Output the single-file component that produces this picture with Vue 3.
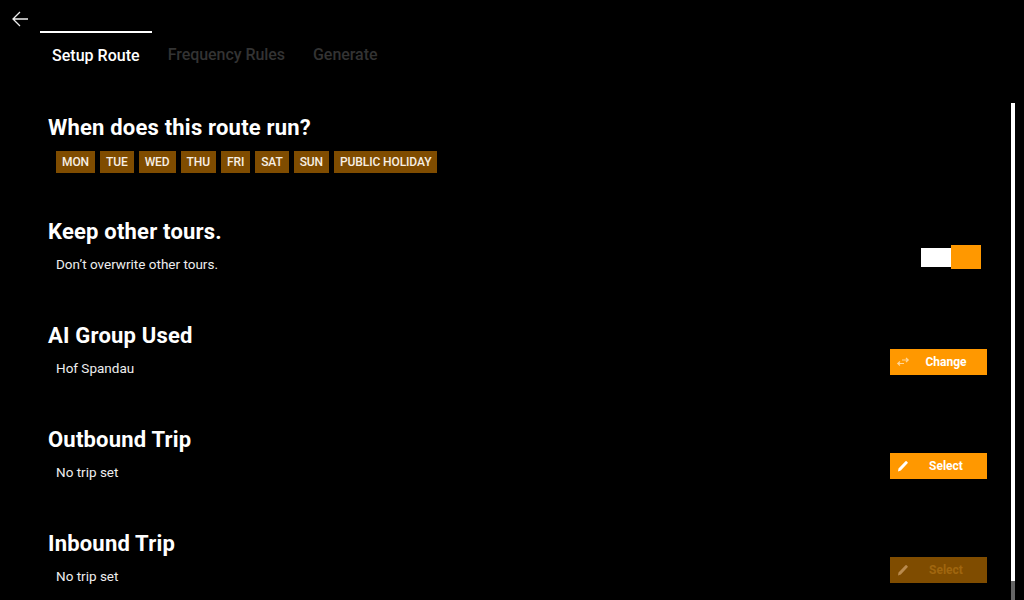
<script setup>
const tabs = [
  { label: 'Setup Route', active: true },
  { label: 'Frequency Rules', active: false },
  { label: 'Generate', active: false }
];

const days = ['MON', 'TUE', 'WED', 'THU', 'FRI', 'SAT', 'SUN', 'PUBLIC HOLIDAY'];

const rows = [
  { title: 'AI Group Used', text: 'Hof Spandau', button: 'Change', icon: 'swap', disabled: false },
  { title: 'Outbound Trip', text: 'No trip set', button: 'Select', icon: 'pencil', disabled: false },
  { title: 'Inbound Trip', text: 'No trip set', button: 'Select', icon: 'pencil', disabled: true }
];
</script>

<template>
  <div class="page">
    <header class="header">
      <button class="back">
        <svg width="18" height="16" viewBox="0 0 18 16">
          <path d="M17 8H2M9 1 2 8l7 7" fill="none" stroke="#eee" stroke-width="1.3" />
        </svg>
      </button>
      <nav class="tabs">
        <div v-for="tab in tabs" :key="tab.label" class="tab" :class="{ active: tab.active }">
          {{ tab.label }}
        </div>
      </nav>
    </header>

    <main class="content">
      <section class="row">
        <div class="info">
          <h2>When does this route run?</h2>
          <div class="days">
            <span v-for="day in days" :key="day" class="day">{{ day }}</span>
          </div>
        </div>
      </section>

      <section class="row">
        <div class="info">
          <h2>Keep other tours.</h2>
          <p>Don’t overwrite other tours.</p>
        </div>
        <div class="toggle">
          <span class="track"></span>
          <span class="knob"></span>
        </div>
      </section>

      <section v-for="row in rows" :key="row.title" class="row">
        <div class="info">
          <h2>{{ row.title }}</h2>
          <p>{{ row.text }}</p>
        </div>
        <button class="action" :class="{ disabled: row.disabled }">
          <svg v-if="row.icon == 'swap'" class="icon" width="14" height="14" viewBox="0 0 14 14">
            <path d="M6 5h6M10 3l2.2 2L10 7M8 8.5H2M4 6.5l-2.2 2 2.2 2" fill="none" stroke="#ffd699" stroke-width="1.2" />
          </svg>
          <svg v-else class="icon" width="14" height="14" viewBox="0 0 14 14">
            <path d="M2 12.5l.5-3L9.5 2.2a.8.8 0 0 1 1.1 0l1 1a.8.8 0 0 1 0 1.1L4.8 11.6z" fill="#fff" />
          </svg>
          <span class="label">{{ row.button }}</span>
        </button>
      </section>

      <div class="scrollbar"></div>
    </main>
  </div>
</template>

<style>
html,
body {
  margin: 0;
  background: #000;
}
</style>

<style scoped>
.page {
  width: 1024px;
  height: 600px;
  overflow: hidden;
  background: #000;
  color: #fff;
  font-family: Roboto, "Liberation Sans", sans-serif;
  display: flex;
  flex-direction: column;
}

.header {
  display: flex;
  height: 103px;
  flex-shrink: 0;
}

.back {
  width: 40px;
  height: 38px;
  padding: 0 0 0 11px;
  border: 0;
  background: none;
  display: flex;
  align-items: center;
}

.tabs {
  display: flex;
  gap: 4px;
  padding-top: 31px;
  align-items: flex-start;
}

.tab {
  padding: 0 12px;
  height: 44px;
  line-height: 44px;
  font-size: 16px;
  font-weight: 500;
  letter-spacing: -0.05px;
  color: #333;
  border-top: 2px solid transparent;
}

.tab.active {
  color: #fff;
  line-height: 46px;
  letter-spacing: 0.02px;
  border-top-color: #fff;
}

.content {
  position: relative;
  flex: 1;
  padding: 8px 37px 0 48px;
}

.row {
  display: flex;
  justify-content: space-between;
  align-items: flex-start;
  height: 104px;
}

h2 {
  margin: 1px 0 0;
  height: 32px;
  line-height: 32px;
  font-size: 22px;
  font-weight: 700;
  letter-spacing: 0.2px;
}

p {
  margin: 6px 0 0 8px;
  height: 20px;
  line-height: 20px;
  font-size: 13.5px;
  color: #eee;
}

.days {
  display: flex;
  gap: 5px;
  margin: 7px 0 0 8px;
}

.day {
  height: 22px;
  line-height: 22px;
  padding: 0 6px;
  background: #7f4c00;
  font-size: 12px;
  font-weight: 500;
  letter-spacing: -0.1px;
  color: #f7efe4;
}

.toggle {
  position: relative;
  width: 60px;
  height: 24px;
  margin: 30px 6px 0 0;
}

.track {
  position: absolute;
  left: 0;
  top: 3px;
  width: 30px;
  height: 19px;
  background: #fff;
}

.knob {
  position: absolute;
  left: 30px;
  top: 0;
  width: 30px;
  height: 24px;
  background: #ff9800;
}

.action {
  position: relative;
  width: 97px;
  height: 26px;
  margin-top: 30px;
  border: 0;
  padding: 0;
  background: #ff9800;
  color: #fff;
  font-family: inherit;
  font-size: 12px;
  font-weight: 700;
  display: flex;
  align-items: center;
  justify-content: center;
}

.icon {
  position: absolute;
  left: 6px;
  top: 6px;
}

.label {
  padding-left: 15px;
}

.action.disabled {
  background: #7f4c00;
  color: #a0660f;
}

.action.disabled .icon path {
  fill: #b98a4d;
}

.scrollbar {
  position: absolute;
  left: 1011px;
  top: 0;
  width: 4px;
  height: 478px;
  background: #fff;
  box-shadow: 0 19px 0 #666;
}
</style>
